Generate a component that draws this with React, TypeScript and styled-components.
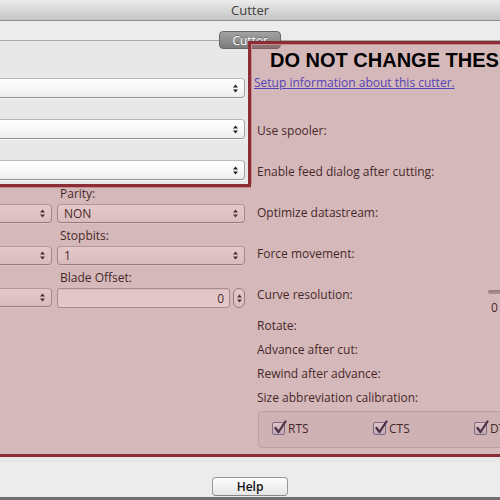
import React from "react";
import styled, { createGlobalStyle } from "styled-components";

const Global = createGlobalStyle`
  html, body {
    margin: 0;
    padding: 0;
    width: 500px;
    height: 500px;
    overflow: hidden;
    background: #ececec;
  }
  body {
    font-family: "Open Sans", "DejaVu Sans", sans-serif;
  }
  * { box-sizing: border-box; }
`;

const Window = styled.div`
  position: relative;
  width: 740px;
  height: 500px;
  margin-left: -120px;
  background: #ececec;
  display: flex;
  flex-direction: column;
  font-family: "Open Sans", "DejaVu Sans", sans-serif;
  font-size: 12px;
  color: #141414;
  overflow: hidden;
`;

const TitleBar = styled.div`
  flex: none;
  height: 21px;
  background: linear-gradient(#ececec, #d6d6d6 55%, #c4c4c4);
  border-bottom: 1px solid #8e8e8e;
  display: flex;
  align-items: center;
  justify-content: center;
  font-size: 13px;
  color: #404040;
`;

const TabStrip = styled.div`
  flex: none;
  height: 19px;
  display: flex;
  justify-content: center;
  align-items: flex-end;
`;

const Tab = styled.div`
  position: relative;
  z-index: 1;
  width: 62px;
  height: 18px;
  margin-bottom: -9px;
  border: 1px solid #686868;
  border-radius: 4px;
  background: linear-gradient(#a2a2a2, #7c7c7c);
  color: #fff;
  font-size: 12px;
  display: flex;
  align-items: center;
  justify-content: center;
  text-shadow: 0 -1px 0 rgba(0, 0, 0, 0.3);
`;

const TabView = styled.div`
  flex: none;
  height: 422px;
  border-top: 1px solid #a9a9a9;
  background: #e8e8e8;
  display: grid;
  grid-template-columns: 374px 1fr;
`;

const LeftColumn = styled.div`
  padding: 37px 9px 0 20px;
  display: flex;
  flex-direction: column;
`;

const TopFields = styled.div`
  display: flex;
  flex-direction: column;
  gap: 21px;
`;

const PortGrid = styled.div`
  margin-top: 7px;
  display: grid;
  grid-template-columns: 152px 1fr;
  column-gap: 5px;
  row-gap: 6px;
`;

const Field = styled.div`
  display: flex;
  flex-direction: column;
`;

const FieldLabel = styled.div`
  height: 14px;
  line-height: 14px;
  margin-bottom: 3px;
  padding-left: 3px;
  white-space: nowrap;
`;

const SelectBox = styled.div<{ $h: number }>`
  height: ${(p) => p.$h}px;
  border: 1px solid #a3a3a3;
  border-top-color: #b8b8b8;
  border-bottom-color: #939393;
  border-radius: 4px;
  background: linear-gradient(#ffffff, #f6f6f6 60%, #ededed);
  box-shadow: 0 1px 0 rgba(255, 255, 255, 0.6);
  display: flex;
  align-items: center;
  padding: 0 6px 0 6px;
  font-size: 12px;
  color: #141414;
`;

const SelectValue = styled.span`
  flex: 1;
`;

const NumberRow = styled.div`
  display: flex;
  gap: 3px;
  height: 20px;
`;

const NumberInput = styled.div`
  flex: 1;
  border: 1px solid #a6a6a6;
  border-radius: 3px;
  background: linear-gradient(#fbfbfb, #ffffff);
  box-shadow: inset 0 1px 1px rgba(0, 0, 0, 0.08);
  display: flex;
  align-items: center;
  justify-content: flex-end;
  padding-right: 5px;
  font-size: 12px;
`;

const Stepper = styled.div`
  width: 12px;
  border: 1px solid #8f8f8f;
  border-radius: 6px;
  background: linear-gradient(#ffffff, #efefef);
  display: flex;
  align-items: center;
  justify-content: center;
`;

const RightColumn = styled.div`
  padding-top: 7px;
  display: flex;
  flex-direction: column;
`;

const Heading = styled.div`
  position: relative;
  z-index: 3;
  margin-left: 16px;
  height: 24px;
  line-height: 24px;
  font-family: "Liberation Sans", Arial, sans-serif;
  font-weight: bold;
  font-size: 20px;
  color: #000;
  white-space: nowrap;
`;

const SetupLink = styled.a`
  margin-top: 3px;
  height: 16px;
  line-height: 16px;
  font-size: 12px;
  color: #2c3ee6;
  text-decoration: underline;
  white-space: nowrap;
`;

const Rows = styled.div`
  margin-top: 19px;
  display: flex;
  flex-direction: column;
`;

const Row = styled.div<{ $h: number }>`
  height: ${(p) => p.$h}px;
  padding-left: 3px;
  display: grid;
  grid-template-columns: 231px 1fr;
  align-items: center;
`;

const RowLabel = styled.div`
  white-space: nowrap;
`;

const SliderBox = styled.div`
  align-self: start;
  padding-top: 16px;
  display: flex;
  flex-direction: column;
`;

const SliderTrack = styled.div`
  width: 110px;
  height: 4px;
  border-radius: 2px;
  background: linear-gradient(#8d8d8d, #b4b4b4);
`;

const TickLabel = styled.div`
  margin-top: 8px;
  margin-left: 3px;
  line-height: 12px;
  font-size: 12px;
`;

const GroupBox = styled.div`
  margin-top: 2px;
  margin-left: 4px;
  height: 37px;
  border: 1px solid #c3c3c3;
  border-radius: 4px;
  background: rgba(0, 0, 0, 0.035);
  display: flex;
  align-items: center;
  padding: 0 0 3px 13px;
`;

const CheckItem = styled.div`
  width: 101px;
  flex: none;
  display: flex;
  align-items: center;
  gap: 3px;
  font-size: 12px;
`;

const CheckBox = styled.div`
  position: relative;
  width: 13px;
  height: 13px;
  border: 1px solid #6d7796;
  border-radius: 2px;
  background: linear-gradient(#f6f8fc, #c9d1e3);
`;

const CheckMark = styled.svg`
  position: absolute;
  left: 0px;
  top: -3px;
`;

const Footer = styled.div`
  flex: 1;
  display: flex;
  justify-content: center;
  padding-top: 15px;
  border-bottom: 3px solid #707070;
`;

const HelpButton = styled.button`
  width: 76px;
  height: 19px;
  border: 1px solid #9a9a9a;
  border-bottom-color: #878787;
  border-radius: 4px;
  background: linear-gradient(#ffffff, #f1f1f1 50%, #e6e6e6);
  font-family: "Open Sans", "DejaVu Sans", sans-serif;
  font-size: 12px;
  font-weight: 600;
  color: #111;
  padding: 0;
`;

const markRed = "#8a2d35";
const markFill = "rgba(172, 78, 82, 0.31)";

const MarkTop = styled.div`
  position: absolute;
  left: 368px;
  top: 41px;
  right: 0;
  height: 143px;
  background: ${markFill};
  border-top: 3px solid ${markRed};
  border-left: 3px solid ${markRed};
  box-shadow: inset 1px 1px 0 #c98a8e;
  pointer-events: none;
  z-index: 2;
`;

const MarkBottom = styled.div`
  position: absolute;
  left: 0;
  top: 184px;
  right: 0;
  height: 273px;
  background: ${markFill};
  border-bottom: 3px solid ${markRed};
  pointer-events: none;
  z-index: 2;
  &::before {
    content: "";
    position: absolute;
    left: 0;
    top: 0;
    width: 371px;
    height: 3px;
    background: ${markRed};
    box-shadow: 0 1px 0 #c98a8e;
  }
`;

const UpDown = () => (
  <svg width="5" height="9" viewBox="0 0 5 9">
    <path d="M0 3.6 L2.5 0.4 L5 3.6Z" fill="#222" />
    <path d="M0 5.4 L2.5 8.6 L5 5.4Z" fill="#222" />
  </svg>
);

const Select = ({ value = "", h = 20 }: { value?: string; h?: number }) => (
  <SelectBox $h={h}>
    <SelectValue>{value}</SelectValue>
    <UpDown />
  </SelectBox>
);

const Check = ({ label }: { label: string }) => (
  <CheckItem>
    <CheckBox>
      <CheckMark width="15" height="15" viewBox="0 0 15 15">
        <path
          d="M2.5 8 L5.5 12 L12.5 1.5"
          fill="none"
          stroke="#1d2340"
          strokeWidth="2.2"
          strokeLinecap="round"
          strokeLinejoin="round"
        />
      </CheckMark>
    </CheckBox>
    <span>{label}</span>
  </CheckItem>
);

export default function App() {
  return (
    <>
      <Global />
      <Window>
        <TitleBar>Cutter</TitleBar>
        <TabStrip>
          <Tab>Cutter</Tab>
        </TabStrip>
        <TabView>
          <LeftColumn>
            <TopFields>
              <Select />
              <Select />
              <Select />
            </TopFields>
            <PortGrid>
              <Field>
                <FieldLabel />
                <Select h={19} />
              </Field>
              <Field>
                <FieldLabel>Parity:</FieldLabel>
                <Select value="NON" h={19} />
              </Field>
              <Field>
                <FieldLabel />
                <Select h={19} />
              </Field>
              <Field>
                <FieldLabel>Stopbits:</FieldLabel>
                <Select value="1" h={19} />
              </Field>
              <Field>
                <FieldLabel />
                <Select h={19} />
              </Field>
              <Field>
                <FieldLabel>Blade Offset:</FieldLabel>
                <NumberRow>
                  <NumberInput>0</NumberInput>
                  <Stepper>
                    <UpDown />
                  </Stepper>
                </NumberRow>
              </Field>
            </PortGrid>
          </LeftColumn>
          <RightColumn>
            <Heading>DO NOT CHANGE THESE SETTINGS</Heading>
            <SetupLink href="#">Setup information about this cutter.</SetupLink>
            <Rows>
              <Row $h={41}>
                <RowLabel>Use spooler:</RowLabel>
              </Row>
              <Row $h={41}>
                <RowLabel>Enable feed dialog after cutting:</RowLabel>
              </Row>
              <Row $h={41}>
                <RowLabel>Optimize datastream:</RowLabel>
              </Row>
              <Row $h={41}>
                <RowLabel>Force movement:</RowLabel>
              </Row>
              <Row $h={39}>
                <RowLabel>Curve resolution:</RowLabel>
                <SliderBox>
                  <SliderTrack />
                  <TickLabel>0</TickLabel>
                </SliderBox>
              </Row>
              <Row $h={24}>
                <RowLabel>Rotate:</RowLabel>
              </Row>
              <Row $h={24}>
                <RowLabel>Advance after cut:</RowLabel>
              </Row>
              <Row $h={24}>
                <RowLabel>Rewind after advance:</RowLabel>
              </Row>
              <Row $h={24}>
                <RowLabel>Size abbreviation calibration:</RowLabel>
              </Row>
            </Rows>
            <GroupBox>
              <Check label="RTS" />
              <Check label="CTS" />
              <Check label="DTR" />
            </GroupBox>
          </RightColumn>
        </TabView>
        <Footer>
          <HelpButton>Help</HelpButton>
        </Footer>
        <MarkTop />
        <MarkBottom />
      </Window>
    </>
  );
}
